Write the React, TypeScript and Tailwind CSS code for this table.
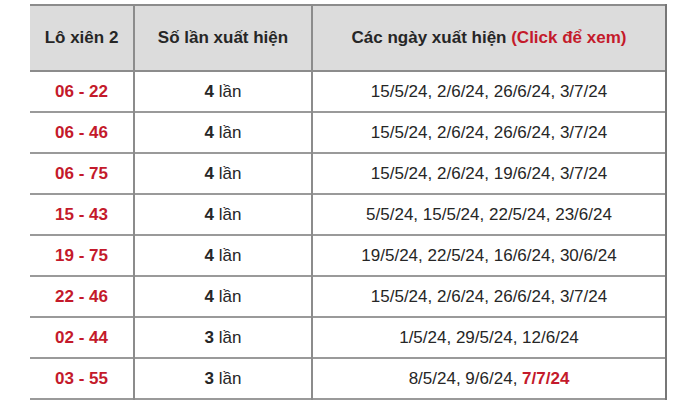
const rows = [
  { pair: "06 - 22", count: 4, dates: ["15/5/24", "2/6/24", "26/6/24", "3/7/24"] },
  { pair: "06 - 46", count: 4, dates: ["15/5/24", "2/6/24", "26/6/24", "3/7/24"] },
  { pair: "06 - 75", count: 4, dates: ["15/5/24", "2/6/24", "19/6/24", "3/7/24"] },
  { pair: "15 - 43", count: 4, dates: ["5/5/24", "15/5/24", "22/5/24", "23/6/24"] },
  { pair: "19 - 75", count: 4, dates: ["19/5/24", "22/5/24", "16/6/24", "30/6/24"] },
  { pair: "22 - 46", count: 4, dates: ["15/5/24", "2/6/24", "26/6/24", "3/7/24"] },
  { pair: "02 - 44", count: 3, dates: ["1/5/24", "29/5/24", "12/6/24"] },
  { pair: "03 - 55", count: 3, dates: ["8/5/24", "9/6/24", "7/7/24"], hot: "7/7/24" },
];

export default function App() {
  return (
    <div className="w-[700px] h-[400px] bg-white overflow-hidden pt-[4px] pl-[30px] font-['Liberation_Sans',Arial,sans-serif] text-[#262626]">
      <table className="w-[637px] border-collapse text-[17px]">
        <thead>
          <tr className="h-[66px] bg-[#dcdcdc] border-t-2 border-b-2 border-[#8c8c8c]">
            <th className="w-[104px] border-r-2 border-[#8c8c8c] font-bold">Lô xiên 2</th>
            <th className="w-[178px] border-r-2 border-[#8c8c8c] font-bold">Số lần xuất hiện</th>
            <th className="border-r-2 border-[#777] font-bold">
              Các ngày xuất hiện <span className="text-[#c41a2b]">(Click để xem)</span>
            </th>
          </tr>
        </thead>
        <tbody>
          {rows.map((r) => (
            <tr key={r.pair} className="h-[41px] border-b-2 border-[#9a9a9a]">
              <td className="border-r-2 border-[#8c8c8c] text-center font-bold text-[#c41a2b]">{r.pair}</td>
              <td className="border-r-2 border-[#8c8c8c] text-center">
                <b>{r.count}</b> lần
              </td>
              <td className="border-r-2 border-[#777] text-center">
                {r.dates.map((d, i) => (
                  <span key={d}>
                    {i > 0 && ", "}
                    {d === r.hot ? <b className="text-[#c41a2b]">{d}</b> : d}
                  </span>
                ))}
              </td>
            </tr>
          ))}
        </tbody>
      </table>
    </div>
  );
}
